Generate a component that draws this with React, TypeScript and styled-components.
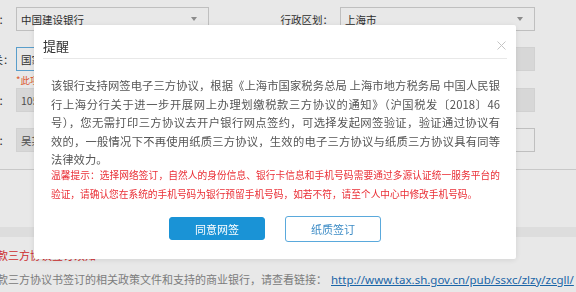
import styled, { createGlobalStyle } from "styled-components";

const GlobalStyle = createGlobalStyle`
  html, body {
    margin: 0;
    padding: 0;
    overflow: hidden;
    background: #fff;
  }
  body {
    width: 576px;
    height: 292px;
    font-family: "Noto Sans CJK SC", "Noto Sans", sans-serif;
  }
`;

// the page behind the dialog is scrolled a little to the right
const Page = styled.div`
  margin-left: -60px;
  width: 720px;
  padding-top: 7px;
  color: #333;
`;

const FieldRow = styled.div<{ $top: number }>`
  display: grid;
  grid-template-columns: 69px 193px 117px 195px;
  column-gap: 7px;
  align-items: center;
  height: 24px;
  margin-top: ${(p) => p.$top}px;
`;

const Label = styled.div`
  text-align: right;
  white-space: nowrap;
  font-size: 10.5px;
  color: #333;
`;

const Select = styled.div`
  display: flex;
  align-items: center;
  justify-content: space-between;
  height: 24px;
  box-sizing: border-box;
  padding: 0 11px 0 4px;
  border: 1px solid #d2d2d2;
  background: #fff;
  font-size: 10.5px;
`;

const Caret = styled.span`
  width: 0;
  height: 0;
  border-left: 3px solid transparent;
  border-right: 3px solid transparent;
  border-top: 4px solid #9a9a9a;
`;

const Input = styled.div<{ $kind: "focus" | "disabled" | "plain" }>`
  display: flex;
  align-items: center;
  height: 24px;
  box-sizing: border-box;
  padding: 0 4px;
  font-size: 10.5px;
  white-space: nowrap;
  overflow: hidden;
  border: 1px solid
    ${(p) => (p.$kind === "focus" ? "#62aee0" : p.$kind === "disabled" ? "#e6e6e6" : "#d2d2d2")};
  background: ${(p) => (p.$kind === "disabled" ? "#ededed" : "#fff")};
  color: ${(p) => (p.$kind === "disabled" ? "#555" : "#333")};
`;

const Hint = styled.div`
  margin: 3px 0 0 76px;
  height: 12px;
  line-height: 12px;
  font-size: 9.5px;
  color: #f2602e;
`;

const Rule = styled.div`
  margin-top: 17px;
  border-top: 1px solid #dcdcdc;
`;

const Band = styled.div`
  margin-top: 57px;
  height: 10px;
  background: #f3f3f3;
`;

const RedNote = styled.div`
  margin-top: 11px;
  padding-left: 24px;
  line-height: 14px;
  font-size: 11px;
  color: #e23131;
  white-space: nowrap;
`;

const GrayNote = styled.div`
  margin-top: 10px;
  padding-left: 24px;
  line-height: 14px;
  font-size: 11px;
  color: #8a8a8a;
  white-space: nowrap;
`;

const Link = styled.a`
  margin-left: 4px;
  font-family: "Noto Sans", sans-serif;
  font-size: 11.5px;
  color: #1d6fb8;
  text-decoration: underline;
`;

const Overlay = styled.div`
  position: fixed;
  inset: 0;
  background: rgba(0, 0, 0, 0.09);
`;

const Dialog = styled.div`
  position: absolute;
  left: 34px;
  top: 25px;
  width: 482px;
  background: #fff;
  border-radius: 2px;
  box-shadow: 0 1px 6px rgba(0, 0, 0, 0.1);
`;

const DialogHeader = styled.div`
  display: flex;
  align-items: center;
  justify-content: space-between;
  height: 34px;
  box-sizing: border-box;
  margin: 0 9px;
  padding: 7px 1px 0 0;
  border-bottom: 1px solid #e8e8e8;
`;

const Title = styled.span`
  font-size: 13px;
  color: #333;
`;

const Close = styled.button`
  display: flex;
  padding: 0;
  border: 0;
  background: none;
  cursor: pointer;
`;

const DialogBody = styled.div`
  padding: 17px 16px 0 17px;
`;

const Text = styled.div`
  font-size: 11.3px;
  line-height: 18.6px;
  color: #555;
`;

const Line = styled.span<{ $full?: boolean }>`
  display: block;
  text-align: justify;
  text-align-last: ${(p) => (p.$full ? "justify" : "left")};
`;

const Warning = styled.div`
  margin-top: -3px;
  font-size: 9.7px;
  line-height: 19px;
  color: #ea2f36;
`;

const Footer = styled.div`
  display: flex;
  justify-content: center;
  align-items: center;
  gap: 20px;
  padding: 12px 0 17px;
`;

const Button = styled.button<{ $primary?: boolean }>`
  width: 96px;
  height: ${(p) => (p.$primary ? 23 : 26)}px;
  padding: 0;
  border-radius: 3px;
  font-family: "Noto Sans CJK SC", sans-serif;
  font-size: 11px;
  cursor: pointer;
  border: 1px solid ${(p) => (p.$primary ? "#1a93d6" : "#5aa9dc")};
  background: ${(p) => (p.$primary ? "#1a93d6" : "#fff")};
  color: ${(p) => (p.$primary ? "#fff" : "#3d8cc6")};
`;

export default function App() {
  return (
    <>
      <GlobalStyle />
      <Page>
        <FieldRow $top={0}>
          <Label>开户银行：</Label>
          <Select>
            中国建设银行
            <Caret />
          </Select>
          <Label>行政区划：</Label>
          <Select>
            上海市
            <Caret />
          </Select>
        </FieldRow>
        <FieldRow $top={16}>
          <Label>主管税务机关：</Label>
          <Input $kind="focus">国家税务总局上海市税务局</Input>
          <Label>开户行：</Label>
          <Input $kind="disabled">中国建设银行上海分行</Input>
        </FieldRow>
        <Hint>*此项为必填项，请选择主管税务机关</Hint>
        <FieldRow $top={2}>
          <Label>税号：</Label>
          <Input $kind="disabled">1050000000000000</Input>
          <Label>清算行号：</Label>
          <Input $kind="disabled">105290000000</Input>
        </FieldRow>
        <FieldRow $top={16}>
          <Label>户名：</Label>
          <Input $kind="disabled">吴某某</Input>
          <Label>缴款账号：</Label>
          <Input $kind="plain" />
        </FieldRow>
        <Rule />
        <Band />
        <RedNote>划缴税款三方协议签订须知</RedNote>
        <GrayNote>
          划缴税款三方协议书签订的相关政策文件和支持的商业银行，请查看链接：
          <Link href="#">http://www.tax.sh.gov.cn/pub/ssxc/zlzy/zcgll/</Link>
        </GrayNote>
      </Page>

      <Overlay>
        <Dialog>
          <DialogHeader>
            <Title>提醒</Title>
            <Close aria-label="关闭">
              <svg width="9" height="9" viewBox="0 0 9 9">
                <path d="M0.5 0.5 L8.5 8.5 M8.5 0.5 L0.5 8.5" stroke="#c4c4c4" strokeWidth="1" />
              </svg>
            </Close>
          </DialogHeader>
          <DialogBody>
            <Text>
              <Line $full>该银行支持网签电子三方协议，根据《上海市国家税务总局 上海市地方税务局 中国人民银</Line>
              <Line $full>行上海分行关于进一步开展网上办理划缴税款三方协议的通知》（沪国税发〔2018〕46</Line>
              <Line $full>号），您无需打印三方协议去开户银行网点签约，可选择发起网签验证，验证通过协议有</Line>
              <Line $full>效的，一般情况下不再使用纸质三方协议，生效的电子三方协议与纸质三方协议具有同等</Line>
              <Line>法律效力。</Line>
            </Text>
            <Warning>
              <Line $full>温馨提示：选择网络签订，自然人的身份信息、银行卡信息和手机号码需要通过多源认证统一服务平台的</Line>
              <Line>验证，请确认您在系统的手机号码为银行预留手机号码，如若不符，请至个人中心中修改手机号码。</Line>
            </Warning>
          </DialogBody>
          <Footer>
            <Button $primary>同意网签</Button>
            <Button>纸质签订</Button>
          </Footer>
        </Dialog>
      </Overlay>
    </>
  );
}
